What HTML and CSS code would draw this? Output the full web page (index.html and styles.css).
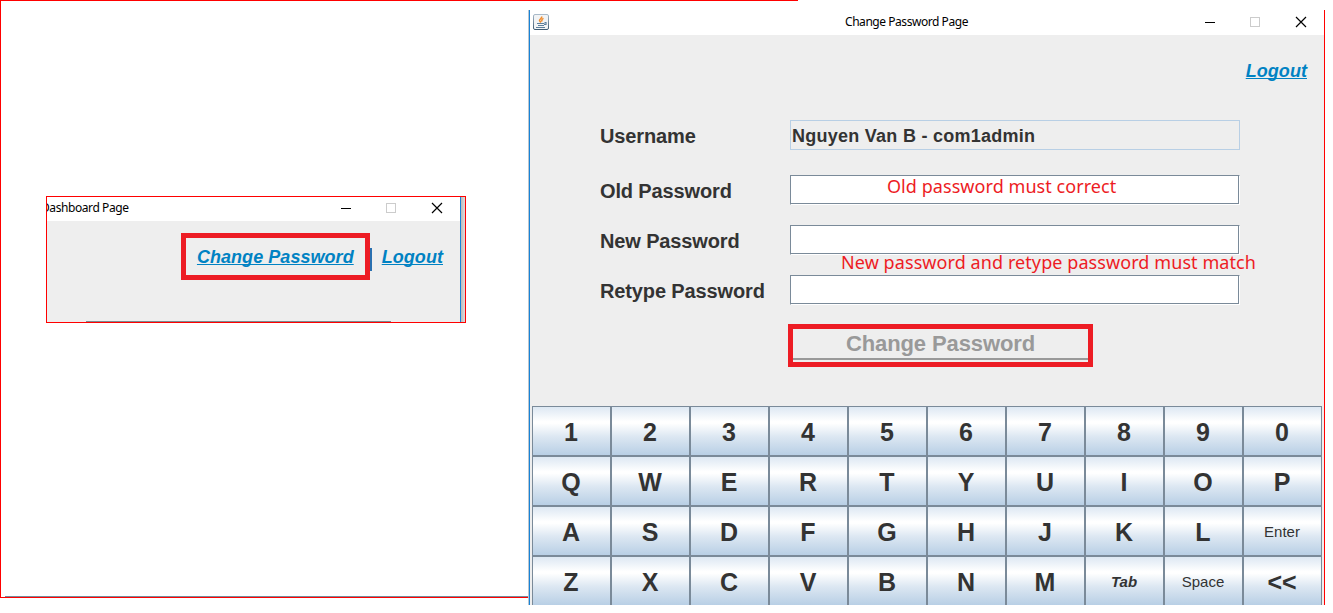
FILE: index.html
```
<!DOCTYPE html>
<html lang="en">
<head>
<meta charset="utf-8">
<title>Change Password Page</title>
<link rel="stylesheet" href="styles.css">
</head>
<body>
<main class="canvas">
  <div class="outline"></div>
  <div class="outline-top"></div>

  <section class="dashboard">
    <header class="titlebar dash-title">
      <span class="dash-name">Dashboard Page</span>
      <svg class="controls" width="102" height="11" viewBox="0 0 102 11" shape-rendering="crispEdges">
        <path d="M0 5.5h10" stroke="#000"/>
        <rect x="45.5" y=".5" width="9" height="9" fill="none" stroke="#ccc"/>
        <path d="M91 0l10 10M101 0l-10 10" stroke="#000" stroke-width="1.2" shape-rendering="auto"/>
      </svg>
    </header>
    <div class="dash-body">
      <nav class="dash-links">
        <a class="link">Change Password</a>
        <i class="divider"></i>
        <a class="link">Logout</a>
      </nav>
      <div class="dash-panel"></div>
    </div>
    <div class="dash-edge"></div>
  </section>
  <div class="mark mark-link"></div>

  <section class="window">
    <header class="titlebar">
      <svg class="java" width="16" height="16" viewBox="0 0 16 16">
        <defs><linearGradient id="frame" x1="0" y1="0" x2="0" y2="1"><stop offset="0" stop-color="#a9bac9"/><stop offset="1" stop-color="#3f5b73"/></linearGradient></defs>
        <rect x=".5" y=".5" width="15" height="15" rx="1.5" fill="#f1f3f5" stroke="url(#frame)"/>
        <path d="M8.800 2.500C9 4.500 6.500 4.800 6.500 6.500L7.800 8.500M10.500 4.300C8.500 5.300 8.500 6.500 9.200 7.500" fill="none" stroke="#ef8b2c" stroke-width="1.500"/>
        <path d="M4 9.500h7.500M5 11.500h6M3 13.500h9M11.500 8.500h1.500v2h-2" fill="none" stroke="#5d7f9c" stroke-width="1.200"/>
      </svg>
      <span class="win-name">Change Password Page</span>
      <svg class="controls" width="102" height="11" viewBox="0 0 102 11" shape-rendering="crispEdges">
        <path d="M0 5.500h10" stroke="#000"/>
        <rect x="45.500" y=".5" width="9" height="9" fill="none" stroke="#ccc"/>
        <path d="M91 0l10 10M101 0l-10 10" stroke="#000" stroke-width="1.2" shape-rendering="auto"/>
      </svg>
    </header>
    <div class="content">
      <nav class="top-links"><a class="link">Logout</a></nav>
      <div class="form">
        <label>Username</label><div class="field readonly">Nguyen Van B - com1admin</div>
        <label>Old Password</label><div class="field"></div>
        <label>New Password</label><div class="field"></div>
        <label>Retype Password</label><div class="field"></div>
      </div>
      <div class="submit">Change Password</div>
      <div class="keyboard">
        <div class="key">1</div><div class="key">2</div><div class="key">3</div><div class="key">4</div><div class="key">5</div><div class="key">6</div><div class="key">7</div><div class="key">8</div><div class="key">9</div><div class="key">0</div>
        <div class="key">Q</div><div class="key">W</div><div class="key">E</div><div class="key">R</div><div class="key">T</div><div class="key">Y</div><div class="key">U</div><div class="key">I</div><div class="key">O</div><div class="key">P</div>
        <div class="key">A</div><div class="key">S</div><div class="key">D</div><div class="key">F</div><div class="key">G</div><div class="key">H</div><div class="key">J</div><div class="key">K</div><div class="key">L</div><div class="key small">Enter</div>
        <div class="key">Z</div><div class="key">X</div><div class="key">C</div><div class="key">V</div><div class="key">B</div><div class="key">N</div><div class="key">M</div><div class="key tab">Tab</div><div class="key small">Space</div><div class="key">&lt;&lt;</div>
      </div>
    </div>
    <svg class="edge-dots" width="1" height="17" viewBox="0 0 1 17"><path d="M.5 0v17" stroke="#8c979f" stroke-dasharray="2 3"/></svg>
  </section>
  <div class="note note-old">Old password must correct</div>
  <div class="note note-new">New password and retype password must match</div>
</main>
</body>
</html>
```
FILE: styles.css
```
* { box-sizing: border-box; }
body { margin: 0; background: #fff; font-family: "Liberation Sans", Arial, sans-serif; color: #333; }
.canvas { position: relative; width: 1333px; height: 613px; overflow: hidden; white-space: nowrap; }

/* annotation frame */
.outline { position: absolute; left: 0; top: 0; width: 529px; height: 598px; border-left: 1px solid #f00; border-bottom: 1px solid #f00; }
.outline::after { content: ""; position: absolute; left: 4px; right: 0; bottom: 0; height: 1px; background: #7a8a99; }
.outline-top { position: absolute; left: 0; top: 0; width: 798px; height: 1px; background: #f00; }
.mark { position: absolute; border: 5px solid #ed1c24; }
.mark-link { left: 181px; top: 233px; width: 189px; height: 47px; }

.titlebar { display: flex; background: #fff; color: #000; font: 12px/16px "Noto Sans", sans-serif; }
.controls { flex: none; overflow: visible; }
.link { color: #0082c3; font-size: 18px; line-height: 20px; font-weight: bold; font-style: italic; letter-spacing: .05px; text-decoration: underline; text-decoration-thickness: 1px; text-underline-offset: 1px; text-decoration-skip-ink: none; }

/* dashboard window */
.dashboard { position: absolute; left: 46px; top: 196px; width: 420px; height: 127px; border: 1px solid #f00; display: grid; grid-template: 24px 1fr / 413px 5px; overflow: hidden; }
.dash-title { justify-content: space-between; padding: 3px 17px 0 0; overflow: hidden; }
.dash-title .controls { margin-top: 3px; }
.dash-name { margin-left: -6px; letter-spacing: -.42px; }
.dash-body { grid-row: 2; background: #eee; display: flex; flex-direction: column; justify-content: space-between; }
.dash-links { display: flex; justify-content: flex-end; padding: 26px 17px 0 0; }
.divider { width: 2px; height: 23px; margin: 1px 10px 0 16px; background: #2a70b0; }
.dash-panel { height: 1px; width: 305px; margin-left: 39px; background: #7a8a8f; }
.dash-edge { grid-area: 1 / 2 / 3 / 3; border-left: 1px solid #1883d7; background: linear-gradient(90deg, #bbb, #ddd); }

/* password window */
.window { position: absolute; left: 528px; top: 10px; width: 797px; height: 595px; border-left: 1px solid #bcc6ce; border-right: 1px solid #f00; overflow: hidden; display: flex; flex-direction: column; }
.window > * { border-left: 1px solid #1883d7; }
.window .titlebar { height: 25px; padding: 4px 17px 0 3px; flex: none; }
.win-name { margin: 0 auto 0 296px; letter-spacing: -.45px; }
.window .titlebar .controls { margin-top: 3px; }
.content { flex: 1; background: #eee; }
.top-links { display: flex; justify-content: flex-end; padding: 26px 17px 0 0; }
.form { display: grid; grid-template-columns: 190px 450px; grid-template-rows: 55px 50px 50px 50px; padding: 39px 0 0 70px; }
.form label { font-size: 20px; line-height: 33px; font-weight: bold; letter-spacing: -.13px; }
.field { height: 30px; background: #fff; border: 1px solid #7a8a99; border-right-color: #fff; border-bottom-color: #fff; box-shadow: inset -1px -1px #7a8a99; font-size: 18px; line-height: 30px; font-weight: bold; letter-spacing: .26px; padding-left: 1px; }
.readonly { background: #eee; border-color: #b8cfe5; box-shadow: none; }
.submit { width: 305px; height: 43px; margin: -1px 0 39px 258px; border: 5px solid #ed1c24; color: #999; font-size: 22px; line-height: 29px; font-weight: bold; letter-spacing: -.1px; text-align: center; background: linear-gradient(#999, #999) 0 29px / 100% 2px no-repeat; }
.keyboard { display: grid; grid-template-columns: repeat(10, 79px); grid-auto-rows: 50px; padding-left: 2px; }
.key { border: 1px solid #7a8a99; background: linear-gradient(#dde8f3 0, #fff 30%, #fff 34%, #dce7f2 62%, #b8cfe5 100%); display: flex; justify-content: center; align-items: center; font-size: 25px; font-weight: bold; padding: 3px 1px 0 0; }
.key.small { font-size: 15px; font-weight: normal; padding-top: 1px; }
.key.tab { font-size: 15px; font-style: italic; padding-top: 1px; }
.edge-dots { position: absolute; left: -1px; top: 51px; border: 0; }

.note { position: absolute; color: #ed1c24; font: 18px/24px "Noto Sans", sans-serif; }
.note-old { left: 887px; top: 174px; letter-spacing: .06px; }
.note-new { left: 841px; top: 250px; letter-spacing: .08px; }
```
